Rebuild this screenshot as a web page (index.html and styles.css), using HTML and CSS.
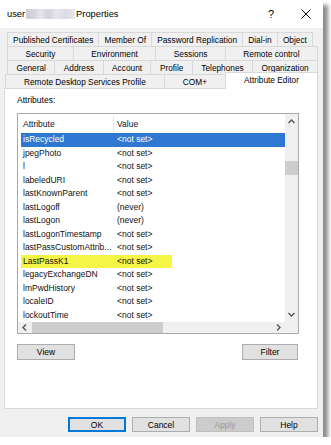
FILE: index.html
```html
<!DOCTYPE html>
<html lang="en">
<head>
  <meta charset="UTF-8">
  <title>user Properties</title>
  <link rel="stylesheet" href="styles.css">
</head>
<body>
  <div class="window">
    <div class="titlebar">
      <div class="title">user<span class="redact"></span>Properties</div>
      <span class="help-q">?</span>
      <svg class="close" width="10" height="10" viewBox="0 0 10 10">
        <path d="M0.5 0.5 L9.5 9.5 M9.5 0.5 L0.5 9.5" stroke="#000" stroke-width="1" fill="none"></path>
      </svg>
    </div>

    <!-- tab strip, four rows -->
    <div class="tabs">
      <div class="tab-row row1">
        <div class="tab">Published Certificates</div>
        <div class="tab">Member Of</div>
        <div class="tab">Password Replication</div>
        <div class="tab">Dial-in</div>
        <div class="tab">Object</div>
      </div>
      <div class="tab-row row2">
        <div class="tab">Security</div>
        <div class="tab">Environment</div>
        <div class="tab">Sessions</div>
        <div class="tab">Remote control</div>
      </div>
      <div class="tab-row row3">
        <div class="tab">General</div>
        <div class="tab">Address</div>
        <div class="tab">Account</div>
        <div class="tab">Profile</div>
        <div class="tab">Telephones</div>
        <div class="tab">Organization</div>
      </div>
      <div class="tab-row row4">
        <div class="tab">Remote Desktop Services Profile</div>
        <div class="tab">COM+</div>
        <div class="tab active">Attribute Editor</div>
      </div>
    </div>

    <div class="page">
      <div class="label">Attributes:</div>
      <div class="listview">
        <div class="list-main">
          <div class="list-body">
            <div class="list-header">
              <div class="col-attr">Attribute</div>
              <div class="col-val">Value</div>
            </div>
            <div class="row selected"><span>isRecycled</span><span>&lt;not set&gt;</span></div>
            <div class="row"><span>jpegPhoto</span><span>&lt;not set&gt;</span></div>
            <div class="row"><span>l</span><span>&lt;not set&gt;</span></div>
            <div class="row"><span>labeledURI</span><span>&lt;not set&gt;</span></div>
            <div class="row"><span>lastKnownParent</span><span>&lt;not set&gt;</span></div>
            <div class="row"><span>lastLogoff</span><span>(never)</span></div>
            <div class="row"><span>lastLogon</span><span>(never)</span></div>
            <div class="row"><span>lastLogonTimestamp</span><span>&lt;not set&gt;</span></div>
            <div class="row"><span>lastPassCustomAttrib...</span><span>&lt;not set&gt;</span></div>
            <div class="row marked"><span>LastPassK1</span><span>&lt;not set&gt;</span></div>
            <div class="row"><span>legacyExchangeDN</span><span>&lt;not set&gt;</span></div>
            <div class="row"><span>lmPwdHistory</span><span>&lt;not set&gt;</span></div>
            <div class="row"><span>localeID</span><span>&lt;not set&gt;</span></div>
            <div class="row"><span>lockoutTime</span><span>&lt;not set&gt;</span></div>
          </div>
          <div class="vscroll">
            <div class="sb-btn up">
              <svg width="7" height="5" viewBox="0 0 7 5"><path d="M0.5 4 L3.5 1 L6.5 4" stroke="#555" stroke-width="1.4" fill="none"></path></svg>
            </div>
            <div class="sb-track"><div class="vthumb"></div></div>
            <div class="sb-btn down">
              <svg width="7" height="5" viewBox="0 0 7 5"><path d="M0.5 1 L3.5 4 L6.5 1" stroke="#555" stroke-width="1.4" fill="none"></path></svg>
            </div>
          </div>
        </div>
        <div class="hscroll-row">
          <div class="hscroll">
            <div class="sb-btn left">
              <svg width="5" height="7" viewBox="0 0 5 7"><path d="M4 0.5 L1 3.5 L4 6.5" stroke="#555" stroke-width="1.4" fill="none"></path></svg>
            </div>
            <div class="hthumb"></div>
            <div class="sb-btn right">
              <svg width="5" height="7" viewBox="0 0 5 7"><path d="M1 0.5 L4 3.5 L1 6.5" stroke="#555" stroke-width="1.4" fill="none"></path></svg>
            </div>
          </div>
          <div class="corner"></div>
        </div>
      </div>

      <div class="page-btns">
        <button class="btn view">View</button>
        <button class="btn filter">Filter</button>
      </div>
    </div>

    <div class="dialog-btns">
      <button class="btn default">OK</button>
      <button class="btn">Cancel</button>
      <button class="btn disabled">Apply</button>
      <button class="btn">Help</button>
    </div>
  </div>
</body>
</html>
```

FILE: styles.css
```css
body {
  margin: 0;
  background-color: #fff;
  font-family: "Liberation Sans", Arial, sans-serif;
  color: #000;
}

.window {
  width: 323px;
  height: 437px;
  background-color: #f0f0f0;
  box-shadow: 5px 5px 4px rgba(0, 0, 0, 0.45);
  display: flex;
  flex-direction: column;
}

.titlebar {
  height: 27px;
  background-color: #fff;
  display: flex;
  align-items: center;
  padding: 0 12px 1px 7px;
}

.title {
  flex: 1;
  display: flex;
  align-items: center;
  font-size: 9.3px;
}

.redact {
  width: 49px;
  height: 10px;
  margin: 0 1px;
  background: linear-gradient(to right, #cdcdd4 0, #d6d6de 18%, #e4e4ea 30%, #d2d2da 48%, #e6e6ec 62%, #dadae2 80%, #e8e8ee 100%);
  filter: blur(0.6px);
}

.help-q {
  font-size: 11px;
  margin-right: 27px;
}

/* tabs */
.tabs {
  margin-top: 4px;
}

.tab-row {
  display: flex;
  height: 14px;
}

.row1 {
  margin: 0 10px 0 8px;
}

.row2,
.row3 {
  margin: 0 5px 0 8px;
}

.row4 {
  margin: 0 5px 0 6px;
}

.tab {
  flex: 1 1 auto;
  display: flex;
  align-items: center;
  justify-content: center;
  padding: 0 2px;
  margin-left: -1px;
  border: 1px solid #d9d9d9;
  border-bottom: none;
  font-size: 8.3px;
  white-space: nowrap;
}

.tab.active {
  height: 17px;
  margin-top: -2px;
  box-sizing: border-box;
  align-items: flex-start;
  padding-top: 2px;
  line-height: 10px;
  background-color: #fff;
  position: relative;
  z-index: 1;
}

/* tab page */
.page {
  margin-left: 4px;
  width: 314px;
  height: 321px;
  box-sizing: border-box;
  padding: 5px 0 0 12px;
  background-color: #fff;
  border: 1px solid #d9d9d9;
}

.label {
  font-size: 8.5px;
  line-height: 12px;
  margin-bottom: 7px;
}

.listview {
  width: 282px;
  height: 221px;
  box-sizing: border-box;
  border: 1px solid #a9a9a9;
  display: flex;
  flex-direction: column;
  font-size: 8.5px;
  color: #111;
}

.list-main {
  display: flex;
  height: 208px;
}

.list-body {
  flex: 1;
}

.list-header {
  height: 19px;
  display: flex;
  align-items: center;
}

.col-attr {
  width: 90px;
  padding-left: 5px;
  height: 16px;
  line-height: 16px;
  border-right: 1px solid #e5e5e5;
}

.col-val {
  padding-left: 3px;
}

.row {
  display: grid;
  grid-template-columns: 94px 1fr;
  height: 13.5px;
  line-height: 13.5px;
  margin-left: 3px;
  padding-left: 2px;
  white-space: nowrap;
}

.row.selected {
  background-color: #2f78d2;
  color: #fff;
}

.row.marked {
  background: linear-gradient(#f5f545, #f5f545) 0 0 / 151px 100% no-repeat;
}

/* scrollbars */
.vscroll {
  width: 13px;
  background-color: #f0f0f0;
  display: flex;
  flex-direction: column;
}

.sb-btn {
  display: flex;
  align-items: center;
  justify-content: center;
}

.sb-btn.up {
  height: 14px;
}

.sb-btn.down {
  height: 16px;
}

.sb-track {
  flex: 1;
}

.vthumb {
  margin-top: 33px;
  height: 14px;
  background-color: #cdcdcd;
}

.hscroll-row {
  display: flex;
  height: 11px;
}

.hscroll {
  flex: 1;
  display: flex;
  background-color: #f0f0f0;
}

.sb-btn.left {
  width: 13px;
}

.sb-btn.right {
  width: 14px;
  margin-left: auto;
}

.hthumb {
  width: 131px;
  margin-left: 1px;
  background-color: #cdcdcd;
}

.corner {
  width: 13px;
  background-color: #f0f0f0;
}

/* buttons */
.btn {
  height: 16px;
  padding: 0;
  font-family: inherit;
  font-size: 8.5px;
  color: #000;
  background-color: #e1e1e1;
  border: 1px solid #adadad;
}

.page-btns {
  display: flex;
  justify-content: space-between;
  width: 281px;
  margin-top: 10px;
}

.btn.view {
  width: 58px;
}

.btn.filter {
  width: 56px;
}

.dialog-btns {
  display: flex;
  justify-content: flex-end;
  gap: 6px;
  margin-top: 8px;
  padding-right: 5px;
}

.dialog-btns .btn {
  width: 58px;
  height: 15px;
}

.btn.default {
  border: 2px solid #0078d7;
}

.btn.disabled {
  background-color: #cccccc;
  border-color: #bfbfbf;
  color: #9a9a9a;
}
```
